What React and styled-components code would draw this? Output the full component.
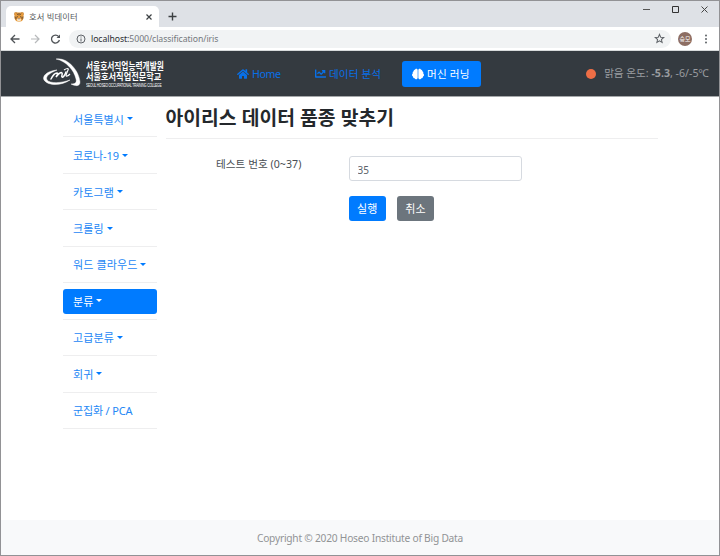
import React from "react";
import styled, { createGlobalStyle } from "styled-components";
import { FaHome, FaChartLine, FaBrain } from "react-icons/fa";

const Global = createGlobalStyle`
  * { box-sizing: border-box; }
  body { margin: 0; background: #fff; }
  button, input { font-family: inherit; }
`;
const Window = styled.div`
  width: 720px; height: 556px; display: flex; flex-direction: column;
  border: 1px solid #929295; overflow: hidden; background: #fff;
  font-family: "Noto Sans", "Noto Sans CJK KR", sans-serif; font-size: 11px;
  white-space: nowrap;
`;
const TabStrip = styled.div`
  height: 26px; flex: none; background: #dee1e6; display: flex; padding-left: 5px;
`;
const Tab = styled.div`
  width: 153px; height: 21px; margin-top: 5px; background: #fff;
  border-radius: 5px 5px 0 0; display: flex; align-items: center; padding: 0 7px 0 8px;
  font-size: 8.3px; color: #55585c;
  svg { flex: none; }
`;
const TabTitle = styled.span`flex: 1; margin: -2px 0 0 5px; letter-spacing: 0.1px;`;
const NewTab = styled.svg`margin: 11px 0 0 9px;`;
const WindowControls = styled.div`
  margin-left: auto; padding: 4px 10px 0 0; display: flex; gap: 20px; height: 13px;
`;
const Toolbar = styled.div`
  height: 24px; flex: none; display: flex; align-items: center; padding: 0 7px 0 8px;
  border-bottom: 1px solid #d7dadb;
`;
const NavIcons = styled.div`display: flex; gap: 8px;`;
const AddressBar = styled.div`
  height: 18px; width: 602px; border-radius: 9px; background: #f1f3f4; margin-left: 8px;
  display: flex; align-items: center; padding: 0 6px 0 7px; color: #74787c;
  font-size: 8.7px;
`;
const Url = styled.span`margin-left: 5px; flex: 1; letter-spacing: -0.07px; b { font-weight: 400; color: #2b2e31; }`;
const Avatar = styled.div`
  width: 14px; height: 14px; border-radius: 50%; background: #8d6e63; color: #fff;
  font-size: 6px; line-height: 14px; text-align: center; margin-left: 7px;
`;
const MenuDots = styled.svg`margin-left: auto;`;

const Navbar = styled.nav`
  height: 46px; flex: none; background: #343a40; border-bottom: 1px solid #a5a8aa;
  display: flex; align-items: center; padding-left: 41px;
`;
const Brand = styled.div`display: flex; width: 195px; align-items: center; color: #fff;`;
const BrandText = styled.div`
  display: flex; flex-direction: column; margin-left: 5px; font-weight: 700; padding-top: 2px;
  width: 76px; font-family: "Noto Sans CJK KR", sans-serif;
`;
const BrandLine = styled.span`
  font-size: ${p => p.$size}px; line-height: ${p => p.$height}px;
  transform: scaleX(${p => p.$stretch}); transform-origin: left;
`;
const BrandCaption = styled.span`
  font: 400 4.8px/7px "Liberation Sans", sans-serif; letter-spacing: -0.25px;
  transform: scaleX(0.68); transform-origin: left;
`;
const NavLink = styled.a`
  display: flex; align-items: center; gap: 3px; color: ${p => (p.$active ? "#fff" : "#0870e8")};
  background: ${p => (p.$active ? "#007bff" : "transparent")};
  height: 26px; width: ${p => p.$width}px; padding-left: ${p => (p.$active ? 10 : 0)}px;
  border-radius: 3px; font-size: 10.6px; letter-spacing: ${p => p.$spacing || 0}px;
  svg { flex: none; }
`;
const Weather = styled.div`
  margin-left: auto; padding-right: 10px; display: flex; align-items: center;
  color: #9a9da0; font-size: 10.6px; gap: 8px;
  span { padding-bottom: 2px; }
`;
const Sun = styled.i`width: 10px; height: 10px; border-radius: 50%; background: #ee6e46;`;

const Main = styled.main`flex: 1; display: flex; padding-left: 62px;`;
const Sidebar = styled.aside`width: 93.5px; padding-top: 4px;`;
const SideItem = styled.div`
  height: 36.44px; padding-top: 5.7px; border-bottom: 1px solid #eeeeef;
`;
const SideLink = styled.a`
  display: flex; align-items: center; height: 25px; padding: 0 0 1px 10px; border-radius: 3px;
  letter-spacing: ${p => p.$spacing ?? 0.12}px;
  color: ${p => (p.$active ? "#fff" : "#2487f5")};
  background: ${p => (p.$active ? "#007bff" : "transparent")};
`;
const Caret = styled.i`
  border: 3px solid transparent; border-top-color: ${p => (p.$active ? "#fff" : "#007bff")};
  border-bottom: 0; margin-left: 3px;
`;
const Content = styled.section`width: 492px; margin-left: 9px;`;
const Title = styled.h3`
  margin: 0; height: 42px; padding-top: 6px; line-height: 29px; font-size: 19.3px; font-weight: 700;
  color: #24282c; border-bottom: 1px solid #eeeeef; letter-spacing: 0.04px;
`;
const Form = styled.form`
  display: grid; grid-template-columns: 131.5px 173px; column-gap: 51.5px; padding-top: 17px;
  row-gap: 15px;
`;
const Label = styled.label`
  padding-left: 50.5px; line-height: 16px; color: #484d52; font-size: 10.6px; letter-spacing: 0.04px;
`;
const Input = styled.input`
  height: 25px; border: 1px solid #d6dae0; border-radius: 3px; padding: 2px 8px 0;
  color: #5c6369; font-size: 10px; width: 173px; outline: 0;
`;
const Actions = styled.div`grid-column: 2; display: flex; gap: 11px;`;
const Button = styled.button`
  width: 37.3px; height: 25px; border: 0; border-radius: 3px; padding: 0 0 1px; color: #fff;
  font-size: 11px; background: ${p => (p.$secondary ? "#6c757d" : "#007bff")};
`;
const Footer = styled.footer`
  height: 35px; flex: none; background: #f8f9fa; color: #919395; text-align: center;
  font-size: 10.2px; line-height: 36px; letter-spacing: -0.22px;
`;

const Tiger = () => (
  <svg width="10" height="10" viewBox="0 0 20 20">
    <circle cx="4" cy="4" r="3.5" fill="#9b6232" /><circle cx="16" cy="4" r="3.5" fill="#9b6232" />
    <path d="M1 1h18v12l-3 5-6 2-6-2-3-5z" fill="#e89b3b" />
    <path d="M6 14l4-2 4 2-1 5H7z" fill="#f6e5cc" />
    <path d="M10 2v5M6 3l2 3M14 3l-2 3M1 10l4 1M19 10l-4 1M2 14l3-1M18 14l-3-1" stroke="#594331" strokeWidth="1.7" />
    <circle cx="6.5" cy="9.5" r="1.2" fill="#393432" /><circle cx="13.5" cy="9.5" r="1.2" fill="#393432" />
    <path d="M8 13h4l-2 2z" fill="#51332b" />
  </svg>
);
const Emblem = () => (
  <svg width="39" height="31" viewBox="0 0 39 31" fill="none" stroke="#fff">
    <path d="M15 12C5 13 0 18 2 22c4 6 17 6 26 0-8 3-20 4-23 0-2-4 3-7 10-10z" fill="#fff" strokeWidth=".5" />
    <path d="M14 1C25-1 37 12 38 24c0 5-5 4-9 2 4 0 6-1 5-5C32 12 24 3 14 1z" fill="#fff" strokeWidth=".4" />
    <path d="M9 21c2-4 4-6 6-6s0 2-1 4c3-4 5-5 6-4s-1 3 0 4 3-2 4-5" strokeWidth="1.5" strokeLinecap="round" />
    <path d="M22 12c3-2 5-2 4 0l-2 5c0 2 2 1 4-1" strokeWidth="1.2" />
  </svg>
);

const menu = [
  { label: "서울특별시", spacing: 0.08 }, { label: "코로나-19", spacing: -0.08 }, { label: "카토그램" },
  { label: "크롤링" }, { label: "워드 클라우드" }, { label: "분류", active: true },
  { label: "고급분류" }, { label: "회귀" }, { label: "군집화 / PCA", plain: true, spacing: -0.15 },
];

export default function App() {
  return (
    <Window>
      <Global />
      <TabStrip>
        <Tab>
          <Tiger /><TabTitle>호서 빅데이터</TabTitle>
          <svg width="6" height="6" viewBox="0 0 6 6" stroke="#3c4043" strokeWidth="1.2"><path d="M.5.5l5 5M5.5.5l-5 5" /></svg>
        </Tab>
        <NewTab width="9" height="9" viewBox="0 0 9 9" stroke="#3c4043" strokeWidth="1.4"><path d="M4.5.5v8M.5 4.5h8" /></NewTab>
        <WindowControls>
          <svg width="9" height="9" viewBox="0 0 9 9" stroke="#555"><path d="M1 4.5h7" /></svg>
          <svg width="9" height="9" viewBox="0 0 9 9" stroke="#333" fill="none"><path d="M1.5 1.5h6v6h-6z" /></svg>
          <svg width="9" height="9" viewBox="0 0 9 9" stroke="#444"><path d="M1.5 1.5l6 6M7.5 1.5l-6 6" /></svg>
        </WindowControls>
      </TabStrip>
      <Toolbar>
        <NavIcons>
          <svg width="12" height="12" viewBox="0 0 12 12" fill="none" stroke="#505458" strokeWidth="1.3"><path d="M10.5 6h-8M6 2L2 6l4 4" /></svg>
          <svg width="12" height="12" viewBox="0 0 12 12" fill="none" stroke="#b7b9bb" strokeWidth="1.2"><path d="M2 6h8M6 2l4 4-4 4" /></svg>
          <svg width="12" height="12" viewBox="0 0 12 12" fill="none" stroke="#505458" strokeWidth="1.3"><path d="M10.4 7a4 4 0 1 1-.7-3.4" /><path d="M11 1.5V5H7.5z" fill="#505458" stroke="none" /></svg>
        </NavIcons>
        <AddressBar>
          <svg width="10" height="10" viewBox="0 0 10 10" fill="none" stroke="#5f6368"><circle cx="5" cy="5" r="4" /><path d="M5 4.5v3M5 2.5v1" /></svg>
          <Url><b>localhost:</b>5000/classification/iris</Url>
          <svg width="11" height="11" viewBox="0 0 24 24" fill="none" stroke="#5f6368" strokeWidth="2.2"><path d="M12 3l2.6 6.2 6.7.6-5.1 4.4 1.6 6.6L12 17.3l-5.8 3.5 1.6-6.6-5.1-4.4 6.7-.6z" /></svg>
        </AddressBar>
        <Avatar>승모</Avatar>
        <MenuDots width="12" height="12" viewBox="0 0 12 12" fill="#5f6368"><circle cx="6" cy="2.5" r="1" /><circle cx="6" cy="6" r="1" /><circle cx="6" cy="9.5" r="1" /></MenuDots>
      </Toolbar>
      <Navbar>
        <Brand>
          <Emblem />
          <BrandText>
            <BrandLine $size={10.4} $height={12} $stretch={0.74}>서울호서직업능력개발원</BrandLine>
            <BrandLine $size={8.8} $height={10} $stretch={0.93}>서울호서직업전문학교</BrandLine>
            <BrandCaption>SEOUL HOSEO OCCUPATIONAL TRAINING COLLEGE</BrandCaption>
          </BrandText>
        </Brand>
        <NavLink $width={78} $spacing={-0.4}><FaHome size={12} />Home</NavLink>
        <NavLink $width={87} $spacing={0.1}><FaChartLine size={11} />데이터 분석</NavLink>
        <NavLink $width={79} $active $spacing={0.2}><FaBrain size={12} />머신 러닝</NavLink>
        <Weather><Sun /><span>맑음 온도: <b>-5.3</b>, -6/-5℃</span></Weather>
      </Navbar>
      <Main>
        <Sidebar>
          {menu.map(m => (
            <SideItem key={m.label}>
              <SideLink $active={m.active} $spacing={m.spacing}>
                {m.label}{!m.plain && <Caret $active={m.active} />}
              </SideLink>
            </SideItem>
          ))}
        </Sidebar>
        <Content>
          <Title>아이리스 데이터 품종 맞추기</Title>
          <Form>
            <Label htmlFor="num">테스트 번호 (0~37)</Label>
            <Input id="num" defaultValue="35" />
            <Actions>
              <Button type="button">실행</Button>
              <Button type="button" $secondary>취소</Button>
            </Actions>
          </Form>
        </Content>
      </Main>
      <Footer>Copyright © 2020 Hoseo Institute of Big Data</Footer>
    </Window>
  );
}
